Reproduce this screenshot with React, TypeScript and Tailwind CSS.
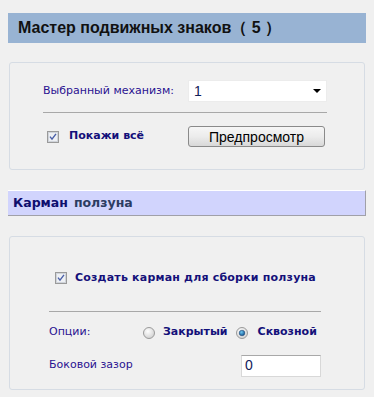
import React from "react";

const CheckBox = () => (
  <svg width="12" height="12" viewBox="0 0 12 12" className="shrink-0">
    <rect x="0.5" y="0.5" width="11" height="11" fill="#e6e6e6" stroke="#9a9a9a" />
    <rect x="1.5" y="1.5" width="9" height="9" fill="#eef0f4" stroke="#d0d4da" />
    <path d="M3 5.6 L5 8.2 L9 2.8" fill="none" stroke="#4a5fa8" strokeWidth="1.4" />
  </svg>
);

const Radio = ({ on }: { on?: boolean }) => (
  <svg width="12" height="12" viewBox="0 0 12 12" className="shrink-0">
    <defs>
      <radialGradient id="rg" cx="40%" cy="35%" r="70%">
        <stop offset="0%" stopColor="#ffffff" />
        <stop offset="100%" stopColor="#cfcfcf" />
      </radialGradient>
      <radialGradient id="dot" cx="40%" cy="35%" r="70%">
        <stop offset="0%" stopColor="#6fc6f0" />
        <stop offset="100%" stopColor="#0a4f8c" />
      </radialGradient>
    </defs>
    <circle cx="6" cy="6" r="5.5" fill="url(#rg)" stroke="#9a9a9a" />
    {on && <circle cx="6" cy="6" r="2.8" fill="url(#dot)" stroke="#1a3d6a" strokeWidth="0.5" />}
  </svg>
);

export default function App() {
  const f = { fontFamily: '"DejaVu Sans", Tahoma, sans-serif' };
  const arial = { fontFamily: '"Liberation Sans", Arial, sans-serif' };
  return (
    <div className="w-[374px] h-[397px] bg-[#f0f0f0] px-2 pt-[13px]" style={f}>
      <div className="h-[30px] bg-[#98b3d3] flex items-center pl-[10px]">
        <span className="text-[16px] font-bold text-[#111]" style={arial}>
          Мастер подвижных знаков（ 5 ）
        </span>
      </div>

      <div className="mt-[19px] mx-px h-[108px] border border-[#d6dce4] rounded-[3px] pt-[17px] px-[33px]">
        <div className="flex items-center h-[22px]">
          <span className="text-[11px] text-[#2a1290] w-[145px]">Выбранный механизм:</span>
          <div className="w-[139px] h-[22px] bg-white border border-[#ececec] flex items-center justify-between px-[5px]">
            <span className="text-[14px] text-[#10205a]" style={arial}>1</span>
            <svg width="8" height="4" viewBox="0 0 8 4"><path d="M0 0 H8 L4 4 Z" fill="#000" /></svg>
          </div>
        </div>
        <div className="mt-[10px] h-px bg-[#a8a8a8] w-[284px]" />
        <div className="mt-[13px] flex items-center h-[21px]">
          <div className="flex items-center w-[145px] pl-[4px] gap-[10px]">
            <CheckBox />
            <span className="text-[11px] font-bold text-[#14107a]">Покажи всё</span>
          </div>
          <button
            className="w-[137px] h-[21px] border border-[#8a8a8a] rounded-[3px] bg-gradient-to-b from-[#f6f6f6] via-[#ececec] to-[#d8d8d8] text-[14px] text-black leading-none flex items-center justify-center"
            style={arial}
          >
            Предпросмотр
          </button>
        </div>
      </div>

      <div className="mt-[20px] h-[26px] bg-[#d1d4fd] border-t border-white border-r border-b border-r-[#a0a0a8] border-b-[#a0a0a8] flex items-center pl-[5px] gap-[6px]">
        <span className="text-[12.5px] font-bold text-[#0e0e6e]">Карман</span>
        <span className="text-[12.5px] font-bold text-[#2c3c62]">ползуна</span>
      </div>

      <div className="mt-[20px] mx-px h-[154px] border border-[#d6dce4] rounded-[3px] px-[39px]">
        <div className="mt-[33px] flex items-center gap-[8px] pl-[6px]">
          <CheckBox />
          <span className="text-[11px] font-bold text-[#14107a] tracking-[0.2px]">Создать карман для сборки ползуна</span>
        </div>
        <div className="mt-[24px] h-px bg-[#a8a8a8] w-[272px]" />
        <div className="mt-[13px] flex items-center h-[16px]">
          <span className="text-[11px] text-[#2a1290] w-[94px]">Опции:</span>
          <Radio />
          <span className="ml-[8px] text-[11px] font-bold text-[#14107a]">Закрытый</span>
          <span className="ml-[8px]"><Radio on /></span>
          <span className="ml-[10px] text-[11px] font-bold text-[#14107a]">Сквозной</span>
        </div>
        <div className="mt-[14px] flex items-center h-[22px]">
          <span className="text-[11px] text-[#2a1290] w-[192px]">Боковой зазор</span>
          <div className="w-[80px] h-[22px] bg-white border border-[#d8d8d8] border-t-[#a8a8a8] flex items-center px-[3px]">
            <span className="text-[14px] text-[#10205a]" style={arial}>0</span>
          </div>
        </div>
      </div>
    </div>
  );
}
